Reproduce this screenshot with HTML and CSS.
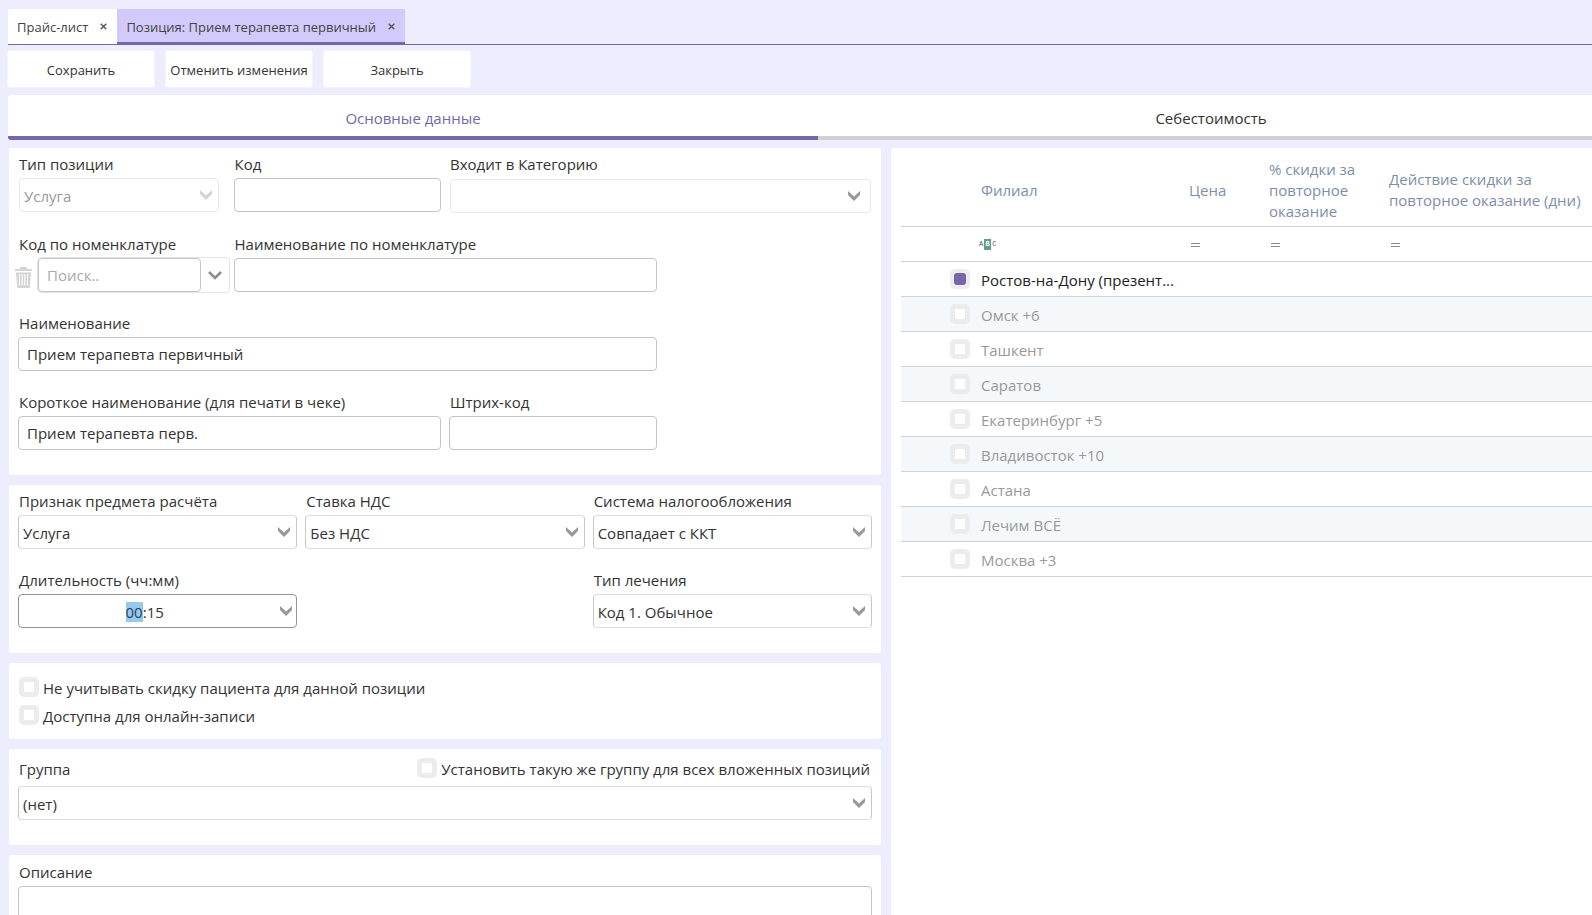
FILE: index.html
```html
<!DOCTYPE html>
<html lang="ru">
<head>
<meta charset="utf-8">
<title>Позиция: Прием терапевта первичный</title>
<link rel="stylesheet" href="styles.css">
</head>
<body>
<svg class="defs" aria-hidden="true">
  <symbol id="chevron" viewBox="0 0 12 10"><path d="M0 0 L6 5.4 L12 0 V4 L6 10 L0 4 Z" fill="currentColor"/></symbol>
  <symbol id="cross" viewBox="0 0 7 7"><path d="M.7 .7 L6.3 6.3 M6.3 .7 L.7 6.3" stroke="currentColor" stroke-width="1.4"/></symbol>
</svg>
<div class="app">
  <nav class="doc-tabs">
    <div class="doc-tab"><a href="#price">Прайс-лист</a><button type="button" class="close" aria-label="Закрыть вкладку"><svg><use href="#cross"/></svg></button></div>
    <div class="doc-tab doc-tab-active"><a href="#item">Позиция: Прием терапевта первичный</a><button type="button" class="close" aria-label="Закрыть вкладку"><svg><use href="#cross"/></svg></button></div>
  </nav>
  <div class="toolbar">
    <button type="button" class="btn">Сохранить</button>
    <button type="button" class="btn">Отменить изменения</button>
    <button type="button" class="btn">Закрыть</button>
  </div>
  <div class="sections" role="tablist">
    <button type="button" role="tab" aria-selected="true" class="section section-active">Основные данные</button>
    <button type="button" role="tab" aria-selected="false" class="section">Себестоимость</button>
  </div>
  <main class="columns">
    <form class="form">
      <section class="panel grid4">
        <div class="field field-type">
          <label for="type">Тип позиции</label>
          <div class="combo combo-light"><select id="type" disabled><option>Услуга</option></select><svg><use href="#chevron"/></svg></div>
        </div>
        <div class="field">
          <label for="code">Код</label>
          <input id="code" type="text">
        </div>
        <div class="field span2">
          <label for="category">Входит в Категорию</label>
          <div class="combo combo-light combo-wide"><select id="category"><option></option></select><svg><use href="#chevron"/></svg></div>
        </div>
        <div class="field field-nomen">
          <label for="nomen-code">Код по номенклатуре</label>
          <div class="lookup">
            <button type="button" class="trash" aria-label="Очистить">
              <svg viewBox="0 0 17 21"><path d="M5 0 H12 V2 H17 V4 H0 V2 H5 Z M1 5.5 H16 L14.8 21 H2.2 Z" fill="#d4d4d4"/><path d="M4.5 7 V18.5 M7.2 7 V18.5 M9.8 7 V18.5 M12.5 7 V18.5" stroke="#fff" stroke-width="1.1"/></svg>
            </button>
            <div class="lookup-box">
              <input id="nomen-code" type="text" placeholder="Поиск..">
              <button type="button" class="drop" aria-label="Открыть список"><svg viewBox="0 0 14 9"><path d="M1 1 L7 7 L13 1" fill="none" stroke="#8c8c8c" stroke-width="2.6"/></svg></button>
            </div>
          </div>
        </div>
        <div class="field span2">
          <label for="nomen-name">Наименование по номенклатуре</label>
          <input id="nomen-name" type="text">
        </div>
        <div class="field name-field">
          <label for="name">Наименование</label>
          <input id="name" type="text" value="Прием терапевта первичный">
        </div>
        <div class="field short-name-field">
          <label for="short-name">Короткое наименование (для печати в чеке)</label>
          <input id="short-name" type="text" value="Прием терапевта перв.">
        </div>
        <div class="field">
          <label for="barcode">Штрих-код</label>
          <input id="barcode" type="text">
        </div>
      </section>

      <section class="panel grid3">
        <div class="field">
          <label for="subject">Признак предмета расчёта</label>
          <div class="combo"><select id="subject"><option>Услуга</option></select><svg><use href="#chevron"/></svg></div>
        </div>
        <div class="field">
          <label for="vat">Ставка НДС</label>
          <div class="combo"><select id="vat"><option>Без НДС</option></select><svg><use href="#chevron"/></svg></div>
        </div>
        <div class="field">
          <label for="tax">Система налогообложения</label>
          <div class="combo"><select id="tax"><option>Совпадает с ККТ</option></select><svg><use href="#chevron"/></svg></div>
        </div>
        <div class="field">
          <label for="duration">Длительность (чч:мм)</label>
          <div class="combo combo-time"><input id="duration" type="text" value="00:15"><svg><use href="#chevron"/></svg></div>
        </div>
        <div class="field last">
          <label for="treatment">Тип лечения</label>
          <div class="combo"><select id="treatment"><option>Код 1. Обычное</option></select><svg><use href="#chevron"/></svg></div>
        </div>
      </section>

      <section class="panel checks">
        <label class="check"><input type="checkbox"><span>Не учитывать скидку пациента для данной позиции</span></label>
        <label class="check"><input type="checkbox"><span>Доступна для онлайн-записи</span></label>
      </section>

      <section class="panel group">
        <div class="group-head">
          <label for="group">Группа</label>
          <label class="check"><input type="checkbox"><span>Установить такую же группу для всех вложенных позиций</span></label>
        </div>
        <div class="combo"><select id="group"><option>(нет)</option></select><svg><use href="#chevron"/></svg></div>
      </section>

      <section class="panel about">
        <div class="field">
          <label for="about">Описание</label>
          <textarea id="about"></textarea>
        </div>
      </section>
    </form>

    <section class="branches">
      <table>
        <colgroup><col class="c-check"><col class="c-name"><col class="c-price"><col class="c-percent"><col></colgroup>
        <thead>
          <tr><th></th><th>Филиал</th><th>Цена</th><th>% скидки за повторное оказание</th><th>Действие скидки за повторное оказание (дни)</th></tr>
          <tr class="filter"><td></td><td><span class="abc"><span>A</span><b>B</b><span>C</span></span></td><td><span class="eq"></span></td><td><span class="eq"></span></td><td><span class="eq"></span></td></tr>
        </thead>
        <tbody>
          <tr class="on"><td><input type="checkbox" id="b1" checked></td><td><label for="b1">Ростов-на-Дону (презент...</label></td><td></td><td></td><td></td></tr>
          <tr><td><input type="checkbox" id="b2"></td><td><label for="b2">Омск +6</label></td><td></td><td></td><td></td></tr>
          <tr><td><input type="checkbox" id="b3"></td><td><label for="b3">Ташкент</label></td><td></td><td></td><td></td></tr>
          <tr><td><input type="checkbox" id="b4"></td><td><label for="b4">Саратов</label></td><td></td><td></td><td></td></tr>
          <tr><td><input type="checkbox" id="b5"></td><td><label for="b5">Екатеринбург +5</label></td><td></td><td></td><td></td></tr>
          <tr><td><input type="checkbox" id="b6"></td><td><label for="b6">Владивосток +10</label></td><td></td><td></td><td></td></tr>
          <tr><td><input type="checkbox" id="b7"></td><td><label for="b7">Астана</label></td><td></td><td></td><td></td></tr>
          <tr><td><input type="checkbox" id="b8"></td><td><label for="b8">Лечим ВСЁ</label></td><td></td><td></td><td></td></tr>
          <tr><td><input type="checkbox" id="b9"></td><td><label for="b9">Москва +3</label></td><td></td><td></td><td></td></tr>
        </tbody>
      </table>
    </section>
  </main>
</div>
<script src="main.js"></script>
</body>
</html>
```
FILE: styles.css
```css
* { box-sizing: border-box; }
body {
  margin: 0;
  background: #eeecff;
  color: #333;
  font: 15px/22px "Open Sans", "Noto Sans", sans-serif;
}
button, input, select, textarea { font: inherit; color: inherit; margin: 0; }
button { border: 0; background: none; padding: 0; cursor: pointer; }
.defs { position: absolute; width: 0; height: 0; }

.app { height: 100vh; overflow: hidden; display: flex; flex-direction: column; padding-top: 9px; }

.doc-tabs { display: flex; margin-left: 8px; border-bottom: 1px solid #7667a9; font-size: 13px; flex: none; }
.doc-tab { display: flex; align-items: center; gap: 12px; height: 35px; padding: 0 10px 0 9px; background: #fff; }
.doc-tab a { color: #444; text-decoration: none; }
.doc-tab-active { background: #d2cafa; box-shadow: inset 0 -2px #7667a9; }
.close { display: flex; color: #555; }
.close svg { width: 7px; height: 7px; }

.toolbar { display: flex; gap: 10px; padding: 5px 7px 7px; flex: none; }
.btn { width: 148px; height: 38px; padding-top: 2px; background: #fff; border: 1px solid #f6f5fc; border-radius: 3px; font-size: 13px; white-space: nowrap; }

.sections { display: grid; grid-template-columns: 810fr 774fr; margin-left: 8px; flex: none; }
.section { height: 45px; background: #fff; border-bottom: 4px solid #d0d0d0; padding: 4px 0 0 12px; }
.section-active { color: #7667a9; border-bottom-color: #7667a9; border-radius: 3px 0 0 3px; padding-left: 0; }

.columns { display: grid; grid-template-columns: 872fr 701fr; gap: 10px; padding: 8px 0 0 9px; flex: 1; min-height: 0; }
.form { display: flex; flex-direction: column; gap: 10px; min-width: 0; }
.panel { background: #fff; border-radius: 3px; padding: 5px 9px 25px; flex: none; }
.grid4 { display: grid; grid-template-columns: repeat(4, 1fr); align-items: start; gap: 20px 8px; }
.grid3 { display: grid; grid-template-columns: repeat(3, 1fr); gap: 20px 8px; }
.span2 { grid-column: span 2; }
.name-field { grid-column: 1 / span 3; }
.short-name-field { grid-column: 1 / span 2; }
.last { grid-column-start: 3; }
.field { display: flex; flex-direction: column; gap: 3px; min-width: 0; }
.field > label { padding-left: 1px; white-space: nowrap; }
.field-type { margin-right: 6px; }
.field-nomen { margin-right: -4px; }

.field input, .combo select, .field textarea {
  width: 100%;
  height: 34px;
  background: #fff;
  border: 1px solid #c4c4c4;
  border-radius: 4px;
  padding: 0 8px;
  outline: 0;
}
.field textarea { height: 120px; resize: none; display: block; }
.combo { position: relative; }
.combo select { appearance: none; display: block; padding: 2px 24px 0 4px; border-color: #dedede #c8c8c8; }
.combo select:disabled { color: #999; opacity: 1; }
.combo svg { position: absolute; right: 7px; top: 12px; width: 12px; height: 10px; color: #999; pointer-events: none; }
.combo-light { margin: 0 1px; }
.combo-light select { border-color: #e8e8e8; }
.combo select:disabled + svg { color: #d4d4d4; }
.combo-wide { margin-top: 1px; }
.combo-wide svg { right: 11px; }
.combo-time input { display: block; border-color: #949494; text-align: center; padding: 2px 26px 0 0; }
.combo-time svg { right: 5px; }
.combo-time input::selection { background: #99c9ea; color: #1b4468; }

.lookup { display: flex; gap: 5px; margin-left: -3px; align-items: center; }
.trash { width: 17px; height: 21px; flex: none; margin-top: 4px; }
.trash svg { display: block; width: 17px; height: 21px; }
.lookup-box { display: flex; flex: 1; min-width: 0; border: 1px solid #e4e4e4; border-radius: 4px; margin: -1px 0; }
.lookup-box input { flex: 1; min-width: 0; }
.lookup-box input::placeholder { color: #aaa; }
.drop { width: 28px; display: flex; align-items: center; justify-content: center; flex: none; }
.drop svg { width: 14px; height: 9px; }

input[type="checkbox"] {
  appearance: none;
  flex: none;
  display: block;
  width: 20px;
  height: 20px;
  border: 5px solid #ececec;
  border-radius: 5px;
  background: #fff;
}
input[type="checkbox"]:checked { border-width: 4px; background: #ececec; }
input[type="checkbox"]:checked::before { content: ""; display: block; height: 12px; border-radius: 3px; background: #7667a9; }
.check { display: flex; gap: 4px; align-items: flex-start; white-space: nowrap; }
.checks { display: flex; flex-direction: column; gap: 6px; padding: 14px 10px 12px; }
.group { padding-top: 9px; }
.group-head { display: flex; justify-content: space-between; padding: 0 2px 6px 1px; }
.about { padding-top: 6px; }

.branches { background: #fff; border-radius: 3px 0 0 0; padding: 10px 0 0 10px; min-width: 0; overflow: hidden; }
table { width: 100%; border-collapse: collapse; table-layout: fixed; line-height: 21px; }
.c-check { width: 74px; }
.c-name { width: 208px; }
.c-price { width: 80px; }
.c-percent { width: 120px; }
th, td { padding: 0 0 0 6px; text-align: left; border-bottom: 1px solid #d0d2d6; height: 35px; }
th { height: 68px; padding-bottom: 3px; font-weight: 400; color: #7e8ea8; }
.filter td { padding-top: 2px; }
tbody tr { color: #999; }
tbody tr.on { color: #222; }
tbody tr:nth-child(even) { background: #f4f8fb; }
tbody td { vertical-align: top; padding-top: 7px; }
td:first-child { padding-left: 49px; }
td label { display: block; margin-top: 1px; white-space: nowrap; }
.eq { display: block; width: 9px; height: 4px; margin-left: 2px; border: solid #888; border-width: 1px 0; }
.abc { display: flex; align-items: center; margin-left: -2px; font: 7px/11px "Liberation Mono", monospace; color: #555; }
.abc b { width: 7px; background: #62a189; color: #fff; text-align: center; margin: 0 1px; }
```
FILE: main.js
```js
const duration = document.getElementById('duration');
duration.focus({ preventScroll: true });
duration.setSelectionRange(0, 2);
```
